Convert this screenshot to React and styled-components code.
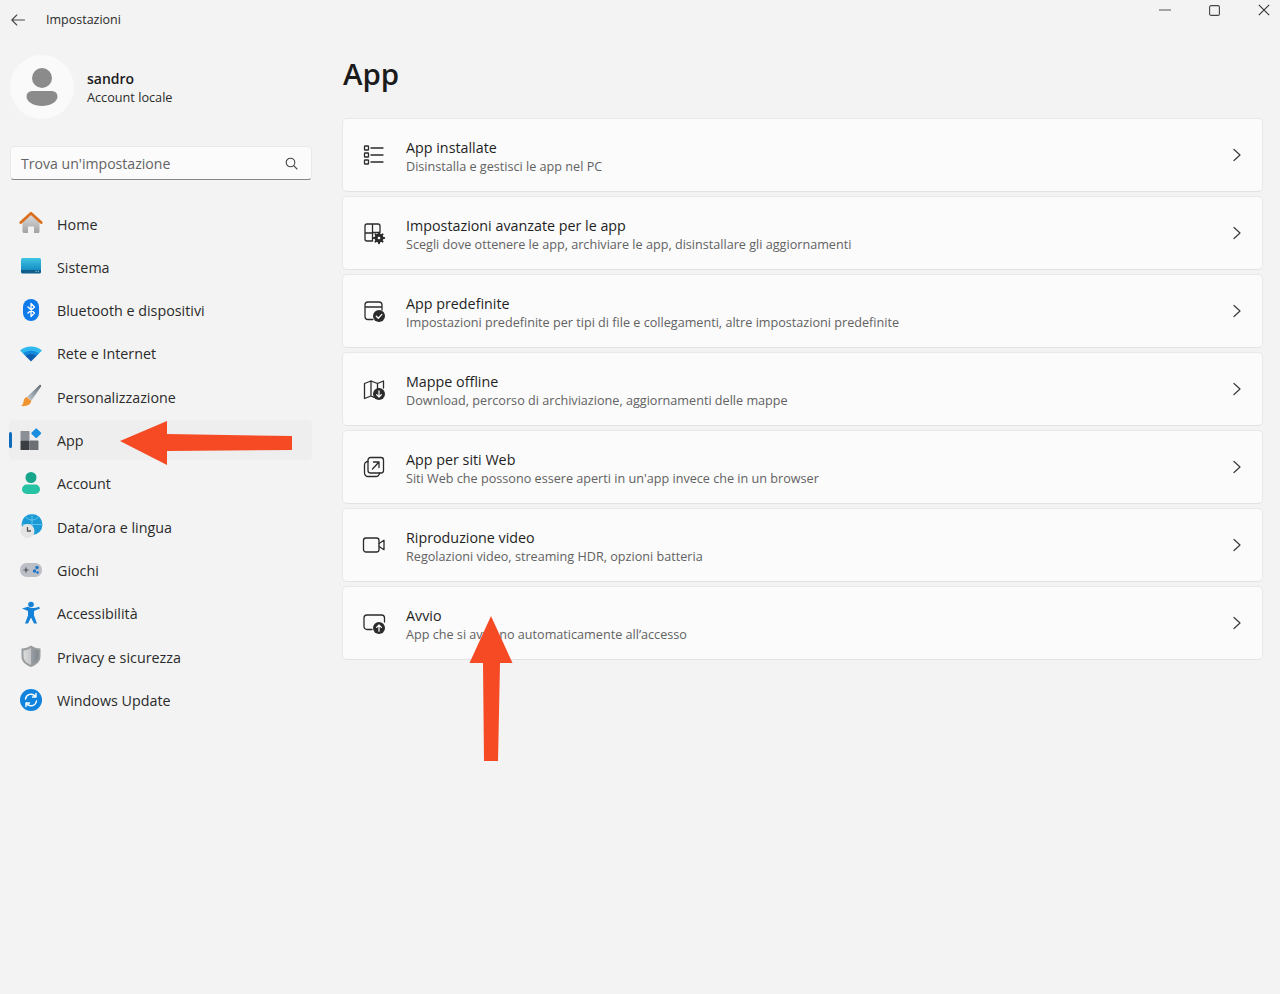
import React from 'react';
import styled, { createGlobalStyle } from 'styled-components';

const GlobalStyle = createGlobalStyle`
  html, body { margin: 0; padding: 0; background: #f3f3f3; }
  body { font-family: "Open Sans", "Noto Sans", "Liberation Sans", sans-serif; color: #1b1b1b; }
  * { box-sizing: border-box; }
`;

const Page = styled.div`
  position: relative;
  width: 1280px;
  height: 994px;
  overflow: hidden;
  display: grid;
  grid-template-columns: 342px 1fr;
  background: #f3f3f3;
`;

const Sidebar = styled.aside`
  display: flex;
  flex-direction: column;
`;

const TitleBar = styled.div`
  height: 39px;
  display: flex;
  align-items: center;
  padding-left: 11px;
  gap: 21px;
`;

const AppTitle = styled.span`
  font-size: 12.5px;
  color: #2a2a2a;
`;

const Profile = styled.div`
  display: flex;
  align-items: center;
  gap: 13px;
  margin: 16px 0 0 10px;
`;

const Avatar = styled.div`
  width: 64px;
  height: 64px;
  border-radius: 50%;
  background: #fafafa;
  display: flex;
  align-items: center;
  justify-content: center;
`;

const ProfileText = styled.div`
  display: flex;
  flex-direction: column;
  gap: 1px;
`;

const ProfileName = styled.span`
  font-size: 14px;
  line-height: 19px;
  font-weight: 600;
`;

const ProfileKind = styled.span`
  font-size: 12.7px;
  line-height: 17px;
  color: #2b2b2b;
`;

const SearchBox = styled.div`
  margin: 27px 0 0 9.5px;
  width: 302px;
  height: 34px;
  background: #fbfbfb;
  border: 1px solid #e9e9e9;
  border-bottom: 1px solid #868686;
  border-radius: 4px;
  display: flex;
  align-items: center;
  justify-content: space-between;
  padding: 0 13px 0 10.5px;
`;

const SearchHint = styled.span`
  font-size: 14.1px;
  color: #636363;
`;

const Nav = styled.nav`
  display: flex;
  flex-direction: column;
  gap: 3.33px;
  margin: 23px 0 0 9px;
  width: 303px;
`;

const NavItem = styled.div`
  position: relative;
  height: 40px;
  border-radius: 5px;
  display: flex;
  align-items: center;
  gap: 14px;
  padding-left: 10px;
  font-size: 14.3px;
  color: #2b2b2b;
  background: ${(p) => (p.$active ? '#eeeeee' : 'transparent')};
`;

const NavLabel = styled.span`
  margin-top: 2px;
`;

const ActiveMark = styled.span`
  position: absolute;
  left: 0;
  top: 12px;
  width: 3px;
  height: 16px;
  border-radius: 2px;
  background: #0f6cbd;
`;

const Main = styled.main`
  display: flex;
  flex-direction: column;
  padding-right: 17px;
`;

const WindowControls = styled.div`
  height: 0;
  margin-right: -26px;
  display: flex;
  justify-content: flex-end;
  align-items: flex-start;
`;

const WindowButton = styled.span`
  width: 49.5px;
  height: 20px;
  display: flex;
  align-items: center;
  justify-content: center;
`;

const Heading = styled.h1`
  margin: 51px 0 0 1px;
  height: 67px;
  font-size: 29.5px;
  line-height: 46px;
  font-weight: 600;
  color: #1b1b1b;
`;

const CardList = styled.div`
  display: flex;
  flex-direction: column;
  gap: 4.5px;
`;

const Card = styled.div`
  height: 73.5px;
  background: #fbfbfb;
  border: 1px solid #e8e8e8;
  border-bottom-color: #e2e2e2;
  border-radius: 5px;
  display: flex;
  align-items: center;
  padding: 0 19px 0 19px;
`;

const CardIcon = styled.span`
  width: 24px;
  height: 24px;
  display: flex;
  margin-right: 20px;
`;

const CardText = styled.div`
  flex: 1;
  display: flex;
  flex-direction: column;
  padding-top: 3px;
`;

const CardTitle = styled.span`
  font-size: 14.3px;
  line-height: 19px;
  color: #1f1f1f;
`;

const CardSub = styled.span`
  margin-top: 1px;
  font-size: 12.64px;
  line-height: 17px;
  color: #626262;
`;

const Arrow = styled.svg`
  position: absolute;
  left: 0;
  top: 0;
  pointer-events: none;
`;

const line = { fill: 'none', stroke: '#2b2b2b', strokeWidth: 1.3, strokeLinecap: 'round', strokeLinejoin: 'round' };

const cardIcons = {
  list: (
    <svg width="24" height="24" viewBox="0 0 24 24" {...line}>
      <rect x="2.500" y="3" width="4" height="4" rx=".6" />
      <rect x="2.500" y="10" width="4" height="4" rx=".6" />
      <rect x="2.500" y="17" width="4" height="4" rx=".6" />
      <path d="M9 5h12M9 12h12M9 19h12" />
    </svg>
  ),
  advanced: (
    <svg width="24" height="24" viewBox="0 0 24 24" {...line}>
      <path d="M10.500 20H5a2 2 0 0 1-2-2V5a2 2 0 0 1 2-2h11a2 2 0 0 1 2 2v6M3 12h8M10.500 3v17M10.500 11.500H18" />
      <circle cx="17" cy="17" r="3.800" fill="#2b2b2b" />
      <path d="M17 11.800v10.400M11.800 17h10.400M13.400 13.400l7.200 7.200M20.600 13.400l-7.200 7.200" strokeWidth="2" />
      <circle cx="17" cy="17" r="1.300" fill="#fbfbfb" stroke="none" />
    </svg>
  ),
  defaults: (
    <svg width="24" height="24" viewBox="0 0 24 24" {...line}>
      <path d="M11 20.500H6a3 3 0 0 1-3-3V6a3 3 0 0 1 3-3h11a3 3 0 0 1 3 3v5M3 8h17" />
      <circle cx="17" cy="17" r="6" fill="#2b2b2b" stroke="none" />
      <path d="M14.300 17.200l2 2 3.600-3.800" stroke="#fbfbfb" />
    </svg>
  ),
  map: (
    <svg width="24" height="24" viewBox="0 0 24 24" {...line}>
      <path d="M9 4L2.500 6.500v15L9 19l3 1.400M9 4l6.500 2.500L21.500 4v7M9 4v15M15.500 6.500v5" />
      <circle cx="17" cy="17" r="6" fill="#2b2b2b" stroke="none" />
      <path d="M17 13.800v6M14.600 17.600l2.400 2.400 2.400-2.400" stroke="#fbfbfb" />
    </svg>
  ),
  web: (
    <svg width="24" height="24" viewBox="0 0 24 24" {...line}>
      <rect x="6" y="2.500" width="15.500" height="15.500" rx="2.500" />
      <path d="M6 6.500A3.500 3.500 0 0 0 2.500 10v8a3.500 3.500 0 0 0 3.500 3.500h8a3.500 3.500 0 0 0 3.500-3.500" />
      <path d="M10.500 14l6.500-7M11.500 7H17v5.500" />
    </svg>
  ),
  video: (
    <svg width="24" height="24" viewBox="0 0 24 24" {...line}>
      <rect x="1.500" y="5" width="15.500" height="14" rx="2.500" />
      <path d="M17 10.500l5-3.200v9.400l-5-3.200" />
    </svg>
  ),
  startup: (
    <svg width="24" height="24" viewBox="0 0 24 24" {...line}>
      <path d="M10 18.500H5a3 3 0 0 1-3-3V7a3 3 0 0 1 3-3h14.500a3 3 0 0 1 3 3v4" />
      <circle cx="17" cy="17" r="6" fill="#2b2b2b" stroke="none" />
      <path d="M17 20.200v-6M14.600 16.400l2.400-2.400 2.400 2.400" stroke="#fbfbfb" />
    </svg>
  ),
};

const navIcons = {
  home: (
    <svg width="24" height="24" viewBox="0 0 24 24">
      <defs>
        <linearGradient id="hw" x1="0" y1="0" x2="0" y2="1"><stop offset="0" stopColor="#dedede" /><stop offset="1" stopColor="#a2a2a2" /></linearGradient>
      </defs>
      <path d="M3.500 10.500L12 3l8.500 7.500v10a1.500 1.500 0 0 1-1.500 1.500h-4v-6.500H9V22H5a1.500 1.500 0 0 1-1.500-1.500z" fill="url(#hw)" />
      <path d="M1.800 11.500L12 2.200l10.200 9.300" fill="none" stroke="#dc6f1f" strokeWidth="2.800" strokeLinecap="round" strokeLinejoin="round" />
    </svg>
  ),
  system: (
    <svg width="24" height="24" viewBox="0 0 24 24">
      <defs>
        <linearGradient id="sy" x1="0" y1="0" x2="0" y2="1"><stop offset="0" stopColor="#3fc4e4" /><stop offset=".75" stopColor="#1690c4" /><stop offset=".76" stopColor="#0f5f8a" /><stop offset="1" stopColor="#0f5f8a" /></linearGradient>
      </defs>
      <rect x="2" y="4" width="20" height="15.500" rx="1.500" fill="url(#sy)" />
      <path d="M16.500 17.300h1.200M18.800 17.300H20" stroke="#a9dcea" strokeWidth=".9" />
    </svg>
  ),
  bluetooth: (
    <svg width="24" height="24" viewBox="0 0 24 24">
      <rect x="4" y="1" width="16" height="22" rx="8" fill="#0f7bea" />
      <path d="M8.500 8.500l7 6.500-3.500 3.500V5.500l3.500 3.500-7 6.500" fill="none" stroke="#fff" strokeWidth="1.300" strokeLinejoin="round" />
    </svg>
  ),
  wifi: (
    <svg width="24" height="24" viewBox="0 0 24 24">
      <path d="M1 9.500C7 4 17 4 23 9.500l-3 3H4z" fill="#2fb8ee" />
      <path d="M4 12.500c4.500-3.800 11.500-3.800 16 0L17.500 15h-11z" fill="#1488db" />
      <path d="M6.500 15c3.200-2.500 7.800-2.500 11 0L12 20.500z" fill="#0d5db0" />
    </svg>
  ),
  brush: (
    <svg width="24" height="24" viewBox="0 0 24 24">
      <defs>
        <linearGradient id="br" x1="1" y1="0" x2="0" y2="1"><stop offset="0" stopColor="#5d6a75" /><stop offset="1" stopColor="#c4ccd2" /></linearGradient>
      </defs>
      <path d="M20.500 1c1.300-.6 2 .3 1.500 1.500L12.500 16.500 8 13z" fill="url(#br)" />
      <path d="M7.500 13l4.800 3.700c-.6 3.800-4.300 6-10.300 5.300 2.200-1.200 2-2.800 2.500-4.500.5-2.300 1.200-3.800 3-4.500z" fill="#f0922d" />
    </svg>
  ),
  apps: (
    <svg width="24" height="24" viewBox="0 0 24 24">
      <rect x="1.500" y="3" width="9" height="9.500" rx=".6" fill="#8b9096" />
      <rect x="1.500" y="12.500" width="9" height="9.500" rx=".6" fill="#3b3f44" />
      <rect x="10.500" y="12.500" width="9" height="9.500" rx=".6" fill="#6c7075" />
      <rect x="13.500" y="1.500" width="7.500" height="7.500" rx="1" fill="#1a8fe0" transform="rotate(45 17.250 5.250)" />
    </svg>
  ),
  account: (
    <svg width="24" height="24" viewBox="0 0 24 24">
      <circle cx="12" cy="6.500" r="5.500" fill="#17a58c" />
      <rect x="3" y="13.500" width="18" height="9.500" rx="4.700" fill="#27c2a3" />
    </svg>
  ),
  time: (
    <svg width="24" height="24" viewBox="0 0 24 24">
      <circle cx="13" cy="10.500" r="10.500" fill="#1b9ad6" />
      <path d="M13 0v21M3 10.500h20M7 3c3 4 9 4 12 0" fill="none" stroke="#7cd1ef" strokeWidth=".7" />
      <circle cx="8.500" cy="17" r="7" fill="#e4e4e4" />
      <path d="M8.500 13V17h3.500" fill="none" stroke="#555" strokeWidth="1.300" />
    </svg>
  ),
  games: (
    <svg width="24" height="24" viewBox="0 0 24 24">
      <rect x="1" y="5" width="22" height="14" rx="6.500" fill="#bcc0c6" />
      <path d="M4.500 12h5M7 9.500v5" stroke="#4d5157" strokeWidth="1.200" />
      <circle cx="18" cy="9.500" r="1.700" fill="#1b73c9" />
      <circle cx="15.500" cy="13" r="1.700" fill="#1b73c9" />
      <circle cx="18.500" cy="14.500" r="1.300" fill="#1b73c9" />
    </svg>
  ),
  access: (
    <svg width="24" height="24" viewBox="0 0 24 24">
      <circle cx="12" cy="3.500" r="2.800" fill="#1582d8" />
      <path d="M3 7.500l6 2.500v4.500L6 22.500h3l3-6 3 6h3l-3-8V10l6-2.500-1-1.800c-4 1.800-8 1.800-11 0z" fill="#1582d8" />
    </svg>
  ),
  shield: (
    <svg width="24" height="24" viewBox="0 0 24 24">
      <defs>
        <linearGradient id="sh" x1="0" y1="0" x2="1" y2="0"><stop offset="0" stopColor="#dcdcdc" /><stop offset=".5" stopColor="#c4c6c8" /><stop offset=".5" stopColor="#9aa0a5" /><stop offset="1" stopColor="#80878c" /></linearGradient>
      </defs>
      <path d="M12 1.500c3 2 6 3 9.500 3v8c0 5-4 8.500-9.500 10.500C6.500 21 2.500 17.500 2.500 12.500v-8c3.500 0 6.500-1 9.500-3z" fill="#9a9da0" />
      <path d="M12 4c2.500 1.500 5 2.300 7.500 2.500v6c0 3.800-3 6.700-7.500 8.300-4.500-1.600-7.500-4.500-7.500-8.300v-6C7 6.300 9.500 5.500 12 4z" fill="url(#sh)" />
    </svg>
  ),
  update: (
    <svg width="24" height="24" viewBox="0 0 24 24">
      <circle cx="12" cy="12" r="11" fill="#0f83dd" />
      <path d="M6.500 11a5.600 5.600 0 0 1 9.800-2.800M17.500 13a5.600 5.600 0 0 1-9.800 2.800" fill="none" stroke="#fff" strokeWidth="1.400" strokeLinecap="round" />
      <path d="M17 5.500v3.500h-3.500M7 18.500V15h3.500" fill="none" stroke="#fff" strokeWidth="1.400" strokeLinecap="round" strokeLinejoin="round" />
    </svg>
  ),
};

const navItems = [
  { icon: 'home', label: 'Home' },
  { icon: 'system', label: 'Sistema' },
  { icon: 'bluetooth', label: 'Bluetooth e dispositivi' },
  { icon: 'wifi', label: 'Rete e Internet' },
  { icon: 'brush', label: 'Personalizzazione' },
  { icon: 'apps', label: 'App', active: true },
  { icon: 'account', label: 'Account' },
  { icon: 'time', label: 'Data/ora e lingua' },
  { icon: 'games', label: 'Giochi' },
  { icon: 'access', label: 'Accessibilità' },
  { icon: 'shield', label: 'Privacy e sicurezza' },
  { icon: 'update', label: 'Windows Update' },
];

const cards = [
  { icon: 'list', title: 'App installate', sub: 'Disinstalla e gestisci le app nel PC' },
  { icon: 'advanced', title: 'Impostazioni avanzate per le app', sub: 'Scegli dove ottenere le app, archiviare le app, disinstallare gli aggiornamenti' },
  { icon: 'defaults', title: 'App predefinite', sub: 'Impostazioni predefinite per tipi di file e collegamenti, altre impostazioni predefinite' },
  { icon: 'map', title: 'Mappe offline', sub: 'Download, percorso di archiviazione, aggiornamenti delle mappe' },
  { icon: 'web', title: 'App per siti Web', sub: "Siti Web che possono essere aperti in un'app invece che in un browser" },
  { icon: 'video', title: 'Riproduzione video', sub: 'Regolazioni video, streaming HDR, opzioni batteria' },
  { icon: 'startup', title: 'Avvio', sub: 'App che si avviano automaticamente all’accesso' },
];

const Chevron = () => (
  <svg width="12" height="14" viewBox="0 0 12 14" fill="none" stroke="#3a3a3a" strokeWidth="1.200" strokeLinecap="round" strokeLinejoin="round">
    <path d="M3 1.500L9 7l-6 5.500" />
  </svg>
);

export default function App() {
  return (
    <Page>
      <GlobalStyle />
      <Sidebar>
        <TitleBar>
          <svg width="14" height="12" viewBox="0 0 14 12" fill="none" stroke="#4a4a4a" strokeWidth="1.100" strokeLinecap="round" strokeLinejoin="round">
            <path d="M13.500 6H.8M5.800 1L.8 6l5 5" />
          </svg>
          <AppTitle>Impostazioni</AppTitle>
        </TitleBar>
        <Profile>
          <Avatar>
            <svg width="32" height="38" viewBox="0 0 32 38">
              <circle cx="16" cy="10" r="10" fill="#8b8b8b" />
              <path d="M6 23h20a5.500 5.500 0 0 1 5.500 5.500C31.500 34 24 38 16 38S.5 34 .5 28.500A5.500 5.500 0 0 1 6 23z" fill="#8b8b8b" />
            </svg>
          </Avatar>
          <ProfileText>
            <ProfileName>sandro</ProfileName>
            <ProfileKind>Account locale</ProfileKind>
          </ProfileText>
        </Profile>
        <SearchBox>
          <SearchHint>Trova un'impostazione</SearchHint>
          <svg width="13" height="13" viewBox="0 0 13 13" fill="none" stroke="#444" strokeWidth="1.100" strokeLinecap="round">
            <circle cx="5.500" cy="5.500" r="4.300" />
            <path d="M8.700 8.700L12 12" />
          </svg>
        </SearchBox>
        <Nav>
          {navItems.map((item) => (
            <NavItem key={item.label} $active={item.active}>
              {item.active && <ActiveMark />}
              {navIcons[item.icon]}
              <NavLabel>{item.label}</NavLabel>
            </NavItem>
          ))}
        </Nav>
      </Sidebar>
      <Main>
        <WindowControls>
          <WindowButton>
            <svg width="12" height="2" viewBox="0 0 12 2"><path d="M0 1h12" stroke="#555" strokeWidth="1" /></svg>
          </WindowButton>
          <WindowButton>
            <svg width="11" height="11" viewBox="0 0 11 11" fill="none" stroke="#444" strokeWidth="1.100"><rect x=".6" y=".6" width="9.800" height="9.800" rx="1.500" /></svg>
          </WindowButton>
          <WindowButton>
            <svg width="12" height="12" viewBox="0 0 12 12" stroke="#333" strokeWidth="1.100"><path d="M.8.800l10.400 10.400M11.200.800L.8 11.200" /></svg>
          </WindowButton>
        </WindowControls>
        <Heading>App</Heading>
        <CardList>
          {cards.map((card) => (
            <Card key={card.title}>
              <CardIcon>{cardIcons[card.icon]}</CardIcon>
              <CardText>
                <CardTitle>{card.title}</CardTitle>
                <CardSub>{card.sub}</CardSub>
              </CardText>
              <Chevron />
            </Card>
          ))}
        </CardList>
      </Main>
      <Arrow width="1280" height="994" viewBox="0 0 1280 994">
        <path d="M120 441L167 421V434L292 436V450L167 451V465Z" fill="#f64a24" />
        <path d="M491 616L512.500 663H500L498 761H484L483 663H469.500Z" fill="#f64a24" />
      </Arrow>
    </Page>
  );
}
